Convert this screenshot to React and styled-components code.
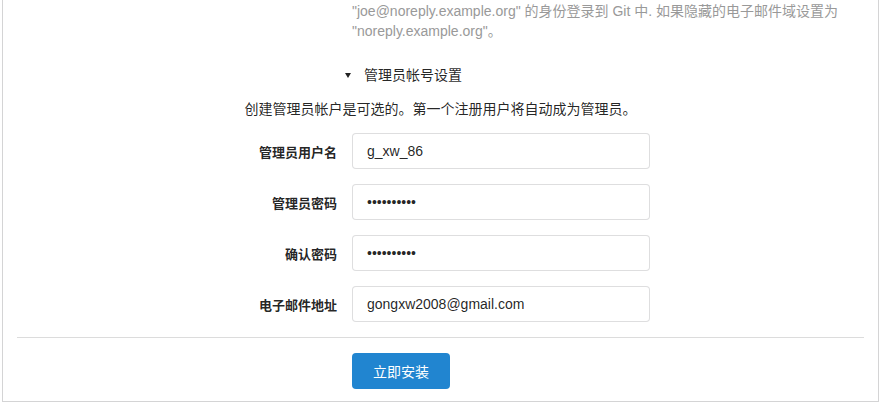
import React from 'react';
import styled, { createGlobalStyle } from 'styled-components';

const GlobalStyle = createGlobalStyle`
  html, body {
    margin: 0;
    padding: 0;
    background: #fff;
  }
  body {
    font-family: "Liberation Sans", "Noto Sans CJK SC", sans-serif;
    font-size: 14px;
    color: rgba(0, 0, 0, 0.87);
    overflow: hidden;
  }
`;

const Page = styled.div`
  width: 880px;
  height: 404px;
  padding: 0 1px 0 2px;
  box-sizing: border-box;
`;

const Segment = styled.div`
  border: 1px solid #d4d4d5;
  border-top: none;
  padding: 1px 14px 12px;
  background: #fff;
`;

const Help = styled.p`
  margin: 0 0 0 335px;
  line-height: 20px;
  color: #999;
`;

const Summary = styled.div`
  display: flex;
  align-items: center;
  margin: 24px 0 0 328px;
  line-height: 20px;
  gap: 13px;
`;

const Caret = styled.span`
  width: 0;
  height: 0;
  border-left: 3.5px solid transparent;
  border-right: 3.5px solid transparent;
  border-top: 5px solid #222;
`;

const Intro = styled.p`
  margin: 14px 0 0;
  line-height: 20px;
  text-align: center;
`;

const Fields = styled.div`
  display: grid;
  grid-template-columns: 320px 298px;
  column-gap: 15px;
  row-gap: 15px;
  align-items: center;
  margin-top: 14px;
`;

const Label = styled.label`
  text-align: right;
  font-size: 13px;
  font-weight: bold;
  color: rgba(0, 0, 0, 0.87);
`;

const Input = styled.input`
  box-sizing: border-box;
  width: 298px;
  height: 36px;
  padding: 0 14px;
  border: 1px solid rgba(34, 36, 38, 0.15);
  border-radius: 4px;
  font-family: inherit;
  font-size: 14px;
  color: rgba(0, 0, 0, 0.87);
  outline: none;
`;

const Divider = styled.hr`
  margin: 15px 0 0;
  border: none;
  border-top: 1px solid #dcdcdc;
`;

const Actions = styled.div`
  padding: 15px 0 0 335px;
`;

const Button = styled.button`
  width: 98px;
  height: 36px;
  border: none;
  border-radius: 4px;
  background: #2185d0;
  color: #fff;
  font-family: inherit;
  font-size: 14px;
  cursor: pointer;
`;

const fields = [
  { label: '管理员用户名', type: 'text', value: 'g_xw_86' },
  { label: '管理员密码', type: 'password', value: '1234567890' },
  { label: '确认密码', type: 'password', value: '1234567890' },
  { label: '电子邮件地址', type: 'text', value: 'gongxw2008@gmail.com' },
];

const App = () => (
  <Page>
    <GlobalStyle />
    <Segment>
      <Help>
        "joe@noreply.example.org" 的身份登录到 Git 中. 如果隐藏的电子邮件域设置为
        <br />
        "noreply.example.org"。
      </Help>
      <Summary>
        <Caret />
        管理员帐号设置
      </Summary>
      <Intro>创建管理员帐户是可选的。第一个注册用户将自动成为管理员。</Intro>
      <Fields>
        {fields.map((f) => (
          <React.Fragment key={f.label}>
            <Label>{f.label}</Label>
            <Input type={f.type} defaultValue={f.value} readOnly />
          </React.Fragment>
        ))}
      </Fields>
      <Divider />
      <Actions>
        <Button type="button">立即安装</Button>
      </Actions>
    </Segment>
  </Page>
);

export default App;
